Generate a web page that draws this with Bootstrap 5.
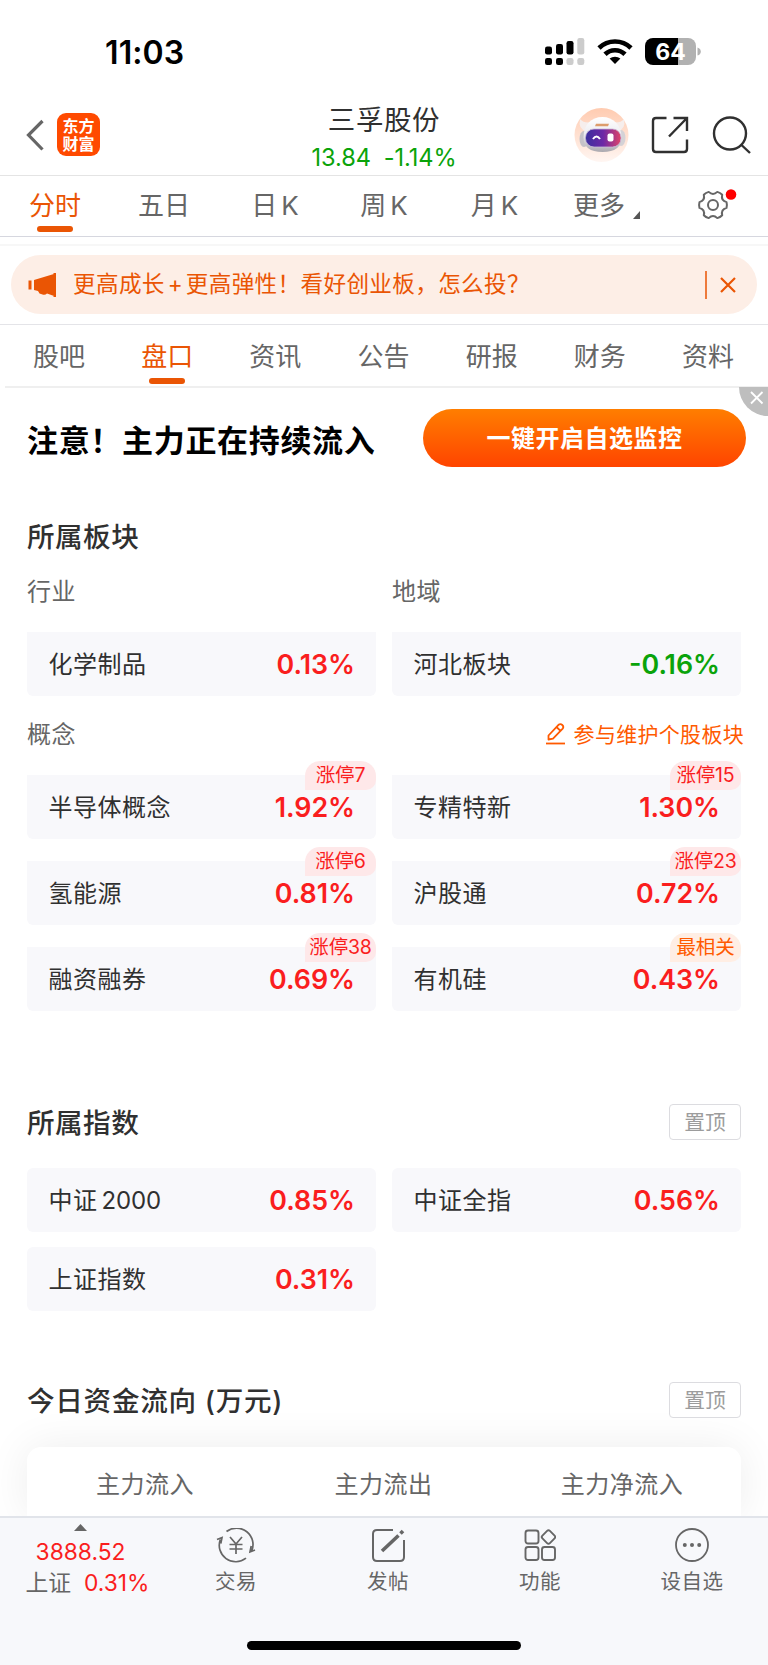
<!DOCTYPE html>
<html lang="zh-CN">
<head>
<meta charset="utf-8">
<meta name="viewport" content="width=device-width, initial-scale=1">
<title>三孚股份</title>
<link rel="stylesheet" href="https://cdn.jsdelivr.net/npm/bootstrap@5.3.0/dist/css/bootstrap.min.css">
<style>
:root{--accent:#ea5504;--up:#fa1e1e;--down:#0aa30a;--ink:#303030;--soft:#666}
body{font-family:Inter,"Noto Sans CJK SC",sans-serif;color:var(--ink);background:#fff;overflow:hidden;line-height:1}
.screen{width:768px;height:1665px;overflow:hidden}
svg{display:block;flex:none}
.status{height:100px;padding:36px 66px 0 105px}
.clock{font-size:32px;font-weight:600;line-height:34px;color:#000;letter-spacing:.1px}
.head{height:76px;border-bottom:1px solid #e4e4e4;padding:0 17px 0 26px}
.app-logo{width:43px;height:43px;border-radius:9px;background:#ff4a00;color:#fff;font-size:16px;font-weight:700;line-height:18px;padding-top:4px;margin:13px 0 0 13px}
.head-title{width:200px;margin-left:184px}
.head-title h1{font-size:27.5px;font-weight:400;line-height:32px;letter-spacing:.6px}
.head-title p{font-size:23.6px;line-height:26px;color:var(--down);padding-top:9px;letter-spacing:-.1px}
.tabs{color:var(--soft);font-size:26px}
.tabs a{color:inherit;text-decoration:none;text-align:center;position:relative;line-height:34px;white-space:nowrap}
.tabs a.on{color:var(--accent)}
.tabs a.on::after{content:"";position:absolute;left:50%;margin-left:-18px;width:36px;height:6px;border-radius:3px;background:var(--accent);top:var(--bar)}
.tabs .k{margin-left:4px}
.period{height:61px;border-bottom:1px solid #d6d7df;padding-top:13px;--bar:37px}
.strip{height:9px;border-bottom:2px solid #f7f7f7}
.notice{height:59px;margin:9px 11px 10px;border-radius:30px;background:#fdeee6;color:var(--accent);font-size:22.6px;padding:0 20px 0 17px;letter-spacing:.35px}
.sections{height:62px;border-top:1px solid #e4e4e8;padding:15px 6px 0 5px;--bar:38px}
.promo{height:112px;border-top:2px solid #efefef;margin-left:5px;padding:0 22px 0 22px;position:relative}
.promo h2{font-size:31px;font-weight:700;color:#000;letter-spacing:.68px;line-height:40px;margin:-5px 0 0}
.cta{width:323px;height:58px;border-radius:29px;border:0;background:linear-gradient(#ff7e00,#ff4400);color:#fff;font-size:24px;font-weight:700;letter-spacing:.5px;line-height:57px;margin-top:-10px;padding:0}
.shut{position:absolute;right:0;top:-1px;width:29px;height:29px;border-bottom-left-radius:29px;background:#bebebe}
.block-title{font-size:27.6px;font-weight:500;line-height:36px;letter-spacing:.45px;margin:0;padding-top:1px;height:36px}
.sub{font-size:24px;line-height:30px;color:var(--soft);letter-spacing:.4px}
.pane{padding:0 27px}
.pairs{display:grid;grid-template-columns:349px 349px;column-gap:16px}
.cell{height:64px;border-radius:6px;background:#f8f8fb;padding:1px 21px 0 21.5px;font-size:24px;letter-spacing:.5px;position:relative}
.cell.flat{border-radius:0 0 6px 6px}
.cell b{font-size:26.8px;font-weight:600;letter-spacing:0;color:var(--up)}
.cell b.dn{color:var(--down)}
.tag{position:absolute;right:0;top:-14px;width:71px;height:29px;border-radius:15px 15px 10px 0;background:#fee8e9;color:var(--up);font-size:19.5px;letter-spacing:-.2px;line-height:29px;text-align:center}
.tag.rel{background:#ffeee4;color:#ff5a00}
.edit{color:#ff5a00;font-size:21px;letter-spacing:.3px;margin:-2px -3px 0 0}
.pin{width:72px;height:36px;border:1px solid #dcdce0;border-radius:4px;background:#fff;color:#9c9c9c;font-size:20.8px;line-height:35px;padding:0;text-align:center}
.flow{height:69px;margin:0 27px;border-radius:14px 14px 0 0;background:#fff;box-shadow:0 0 44px rgba(0,0,0,.075);font-size:24px;color:var(--soft);letter-spacing:.5px;padding-top:7px}
.dock{height:149px;border-top:2px solid #e1e4ea;background:#f7f8fb;position:relative;color:var(--soft);z-index:2}
.dock-item{width:152px;font-size:20.5px;letter-spacing:.5px;padding-top:10px}
.dock-item span{line-height:28px;margin-top:4px}
.idx{width:160px;font-size:22.8px;line-height:28px;padding-top:6px}
.idx i{font-style:normal;color:var(--up)}
.bar-home{position:absolute;left:247px;bottom:15px;width:274px;height:9px;border-radius:5px;background:#000}
</style>
<script src="https://cdn.jsdelivr.net/npm/bootstrap@5.3.0/dist/js/bootstrap.bundle.min.js"></script>
</head>
<body>
<main class="screen d-flex flex-column">
  <div class="status d-flex justify-content-between flex-shrink-0">
    <div class="clock">11:03</div>
    <svg width="158" height="30" viewBox="0 0 158 30">
      <g>
        <rect x="1" y="10.500" width="7" height="8" rx="2.200"/><rect x="12" y="8" width="7" height="10.500" rx="2.200"/><rect x="22.500" y="5" width="7" height="13.500" rx="2.200"/><rect x="33.300" y="2" width="7" height="16.500" rx="2.200" fill="#ccc"/>
        <rect x="1" y="22" width="7" height="7" rx="2.200"/><rect x="12" y="22" width="7" height="7" rx="2.200"/><rect x="22.500" y="22" width="7" height="7" rx="2.200" fill="#ccc"/><rect x="33.300" y="22" width="7" height="7" rx="2.200" fill="#ccc"/>
      </g>
      <g fill="none" stroke="#000" stroke-width="4.700"><path d="M55 12a23 23 0 0 1 32 0"/><path d="M61 18.300a14.400 14.400 0 0 1 20 0"/></g>
      <path d="M65.600 22.600a8.500 8.500 0 0 1 10.800 0L71 28z"/>
      <clipPath id="bat"><rect x="101" y="2" width="51" height="27" rx="8"/></clipPath>
      <g clip-path="url(#bat)"><rect x="101" y="2" width="33" height="27"/><rect x="134" y="2" width="18" height="27" fill="#b1b1b1"/></g>
      <path d="M153.500 11.500q3.300 1 3.300 4t-3.300 4z" fill="#b1b1b1"/>
      <text x="126.500" y="24" font-size="23" font-weight="700" fill="#fff" text-anchor="middle">64</text>
    </svg>
  </div>

  <header class="head d-flex align-items-start flex-shrink-0">
    <svg width="18" height="32" viewBox="0 0 18 32" style="margin-top:19px"><path d="M16.500 2L2.500 16l14 14.500" fill="none" stroke="#666" stroke-width="3.200"/></svg>
    <div class="app-logo text-center">东方<br>财富</div>
    <div class="head-title text-center">
      <h1 class="mb-0 mt-1">三孚股份</h1>
      <p class="mb-0">13.84&nbsp; -1.14%</p>
    </div>
    <svg class="ms-auto" width="178" height="60" viewBox="0 0 178 60" style="margin-top:5px">
      <defs>
        <linearGradient id="halo" x2="0" y2="1"><stop offset="0" stop-color="#ffcbb0"/><stop offset="1" stop-color="#fff6f2"/></linearGradient>
        <linearGradient id="visor"><stop offset="0" stop-color="#3b2f9e"/><stop offset=".5" stop-color="#6d28a6"/><stop offset="1" stop-color="#e04468"/></linearGradient>
        <linearGradient id="shell" x2="0" y2="1"><stop offset="0" stop-color="#fff"/><stop offset=".5" stop-color="#ececf0"/><stop offset="1" stop-color="#aaa8ae"/></linearGradient>
      </defs>
      <circle cx="28.500" cy="30" r="27" fill="url(#halo)"/>
      <path d="M7 14q-2 10 6 12l7-9q-9 2-13-3zM51 14q2 10-6 12l-7-9q9 2 13-3z" fill="#f6eeec"/>
      <ellipse cx="11" cy="34" rx="4.500" ry="8" fill="#c5c2c8"/><ellipse cx="48" cy="33" rx="4.500" ry="8" fill="#d4d2d6"/>
      <path d="M29.500 12C40 12 48.500 20 48.500 32.500q0 14.500-19 14.500t-19-14.500C10.500 20 18 12 29.500 12z" fill="url(#shell)"/>
      <rect x="12.500" y="24" width="35.500" height="18" rx="8.500" fill="url(#visor)" stroke="#c9b9d8" stroke-width=".8"/>
      <path d="M23 18.800h13l-1 2.400H22z" fill="#dd9d6c"/>
      <path d="M20 34q3.500-5 7 0" fill="none" stroke="#fff" stroke-width="2"/><rect x="34.500" y="28.500" width="6" height="8" rx="2" fill="#fff"/>
      <g fill="none" stroke="#303030" stroke-width="2.400"><path d="M93.500 13H83q-3 0-3 3v28q0 3 3 3h28q3 0 3-3V34.500M100.500 13H114v13M113.500 13.500L96 31.500"/><circle cx="157" cy="28.500" r="16"/><path d="M168.500 40l8.500 8"/></g>
    </svg>
  </header>

  <nav class="tabs period d-flex flex-shrink-0">
    <a class="on" style="width:110px" href="#">分时</a><a style="width:108px" href="#">五日</a><a style="width:114px" href="#">日<span class="k">K</span></a><a style="width:104px" href="#">周<span class="k">K</span></a><a style="width:117px" href="#">月<span class="k">K</span></a>
    <a style="width:103px" href="#" class="d-flex justify-content-center align-items-start ps-1">更多<svg class="ms-2" width="7" height="8" style="margin-top:22px"><path d="M7 0v8H0z" fill="#555"/></svg></a>
    <svg width="42" height="36" viewBox="0 0 42 36" style="margin-left:40px;margin-top:-1px">
      <g fill="none" stroke="#666" stroke-width="2" stroke-linejoin="round"><circle cx="17" cy="17" r="5"/><path d="M30.500 14.100Q31.300 17 30.500 19.900Q24.800 21.500 26.200 27.300Q24.200 29.400 21.300 30.100Q17 26 12.700 30.100Q9.800 29.400 7.800 27.300Q9.200 21.500 3.500 19.900Q2.700 17 3.500 14.100Q9.200 12.500 7.800 6.700Q9.800 4.600 12.700 3.900Q17 8 21.300 3.900Q24.200 4.600 26.200 6.700Q24.800 12.500 30.500 14.100z"/></g>
      <circle cx="35" cy="6.500" r="5.300" fill="#f00"/>
    </svg>
  </nav>
  <div class="strip flex-shrink-0"></div>

  <div class="notice d-flex align-items-center flex-shrink-0">
    <svg width="29" height="24" viewBox="0 0 29 24"><path d="M.5 7.500h3v9h-3zM6 7L27.500.500v23L19 20.500q-2 2-4.500 1l-3-1-1.500-2.500L6 17zM25.500 0h2.500v24h-2.500z" fill="#ea5504"/></svg>
    <span class="flex-grow-1" style="margin-left:16px">更高成长<span style="display:inline-block;width:21px;text-align:center">+</span>更高弹性！看好创业板，怎么投？</span>
    <svg width="33" height="28" viewBox="0 0 33 28"><path d="M2 0v28" stroke="#ee7a3c" stroke-width="2"/><path d="M17 7l14 14M31 7L17 21" stroke="#ea5504" stroke-width="2.200"/></svg>
  </div>

  <nav class="tabs sections d-flex flex-shrink-0">
    <a class="flex-fill" href="#">股吧</a><a class="on flex-fill" href="#">盘口</a><a class="flex-fill" href="#">资讯</a><a class="flex-fill" href="#">公告</a><a class="flex-fill" href="#">研报</a><a class="flex-fill" href="#">财务</a><a class="flex-fill" href="#">资料</a>
  </nav>

  <div class="promo d-flex align-items-center justify-content-between flex-shrink-0">
    <h2>注意！主力正在持续流入</h2>
    <button class="cta">一键开启自选监控</button>
    <div class="shut"><svg width="29" height="29"><path d="M12 5l11.500 11.500M23.500 5L12 16.500" stroke="#fff" stroke-width="1.800"/></svg></div>
  </div>

  <section class="pane flex-shrink-0" style="height:584px;padding-top:20px">
    <h3 class="block-title">所属板块</h3>
    <div class="pairs sub" style="margin-top:23px"><span>行业</span><span>地域</span></div>
    <div class="pairs" style="margin-top:25px">
      <div class="cell flat d-flex align-items-center justify-content-between">化学制品<b>0.13%</b></div>
      <div class="cell flat d-flex align-items-center justify-content-between">河北板块<b class="dn">-0.16%</b></div>
    </div>
    <div class="d-flex justify-content-between align-items-center" style="margin-top:24px">
      <span class="sub">概念</span>
      <span class="edit d-flex align-items-center"><svg width="20" height="22" viewBox="0 0 20 22"><g fill="none" stroke="#ff5a00" stroke-width="1.800"><path d="M0 20.500h19"/><path d="M2.500 16.500V12.500L12.500 1.800q2-1.500 3.800.2t.4 3.600L7 15.700zM10.500 4l4 3.800" stroke-linejoin="round"/></g></svg><span style="margin-left:8px">参与维护个股板块</span></span>
    </div>
    <div class="pairs" style="margin-top:25px;row-gap:22px">
      <div class="cell flat d-flex align-items-center justify-content-between">半导体概念<b>1.92%</b><span class="tag">涨停7</span></div>
      <div class="cell flat d-flex align-items-center justify-content-between">专精特新<b>1.30%</b><span class="tag">涨停15</span></div>
      <div class="cell flat d-flex align-items-center justify-content-between">氢能源<b>0.81%</b><span class="tag">涨停6</span></div>
      <div class="cell flat d-flex align-items-center justify-content-between">沪股通<b>0.72%</b><span class="tag">涨停23</span></div>
      <div class="cell flat d-flex align-items-center justify-content-between">融资融券<b>0.69%</b><span class="tag">涨停38</span></div>
      <div class="cell flat d-flex align-items-center justify-content-between">有机硅<b>0.43%</b><span class="tag rel">最相关</span></div>
    </div>
  </section>

  <section class="pane flex-shrink-0" style="height:278px;padding-top:22px">
    <div class="d-flex justify-content-between align-items-center"><h3 class="block-title">所属指数</h3><button class="pin">置顶</button></div>
    <div class="pairs" style="margin-top:28px;row-gap:15px">
      <div class="cell d-flex align-items-center justify-content-between"><span>中证<span style="margin-left:4px;letter-spacing:-.1px">2000</span></span><b>0.85%</b></div>
      <div class="cell d-flex align-items-center justify-content-between">中证全指<b>0.56%</b></div>
      <div class="cell d-flex align-items-center justify-content-between">上证指数<b>0.31%</b></div>
    </div>
  </section>

  <section class="flex-shrink-0" style="height:156px;padding-top:22px">
    <div class="pane d-flex justify-content-between align-items-center position-relative" style="z-index:1"><h3 class="block-title" style="letter-spacing:.7px">今日资金流向 (万元)</h3><button class="pin">置顶</button></div>
    <div class="flow d-flex align-items-center text-center" style="margin-top:29px"><span style="width:236px">主力流入</span><span style="width:241px">主力流出</span><span style="width:236px">主力净流入</span></div>
  </section>

  <footer class="dock flex-shrink-0 d-flex align-items-start">
    <div class="idx d-flex flex-column align-items-center">
      <svg width="13" height="7"><path d="M6.500 0L13 7H0z" fill="#666"/></svg>
      <i style="margin-top:7px;padding-left:1px">3888.52</i>
      <span style="margin-top:3px;padding-left:15px;white-space:nowrap">上证 &nbsp;<i>0.31%</i></span>
    </div>
    <div class="dock-item d-flex flex-column align-items-center">
      <svg width="40" height="36" viewBox="0 0 40 36"><g fill="none" stroke="#666" stroke-width="1.700"><path d="M10.500 3.500A16.500 16.500 0 0 1 35.500 23.500M39 22l-5 2 1.200-6M30 30.200A16.500 16.500 0 0 1 4.300 11.500M1 11.500l5-2-1.200 6M14 9l6 7 6-7M13.500 16.500h13M13.500 21h13M20 16v10"/></g></svg><span>交易</span>
    </div>
    <div class="dock-item d-flex flex-column align-items-center">
      <svg width="34" height="36" viewBox="0 0 34 36"><path d="M22 2H6Q2 2 2 6v23q0 4 4 4h23q4 0 4-4V12" fill="none" stroke="#666" stroke-width="2"/><path d="M11 23L27.500 7.500M29.500 5.500l2.500-2.500" stroke="#666" stroke-width="3.600"/></svg><span>发帖</span>
    </div>
    <div class="dock-item d-flex flex-column align-items-center">
      <svg width="32" height="36" viewBox="0 0 32 36"><g fill="none" stroke="#666" stroke-width="1.900"><rect x="1.500" y="2.500" width="13" height="13" rx="2.500"/><rect x="1.500" y="19" width="13" height="13" rx="2.500"/><rect x="18" y="19" width="13" height="13" rx="2.500"/><rect x="19.200" y="3.700" width="10.600" height="10.600" rx="2" transform="rotate(45 24.500 9)"/></g></svg><span>功能</span>
    </div>
    <div class="dock-item d-flex flex-column align-items-center">
      <svg width="36" height="36" viewBox="0 0 36 36"><circle cx="18" cy="17" r="16" fill="none" stroke="#666" stroke-width="1.800"/><g fill="#666"><circle cx="10.800" cy="17" r="2"/><circle cx="18" cy="17" r="2"/><circle cx="25.200" cy="17" r="2"/></g></svg><span>设自选</span>
    </div>
    <div class="bar-home"></div>
  </footer>
</main>
</body>
</html>
